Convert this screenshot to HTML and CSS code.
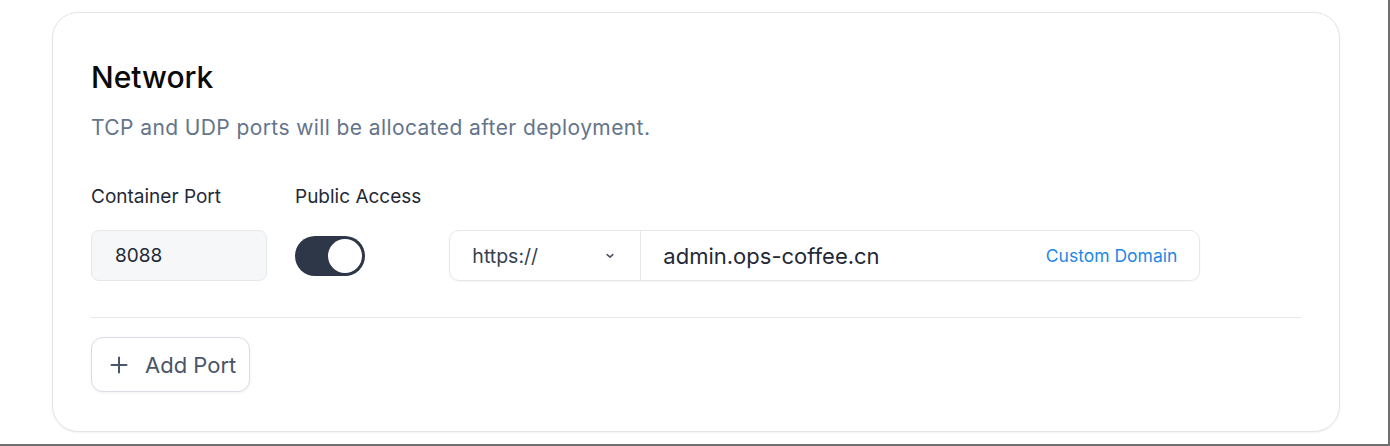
FILE: index.html
```html
<!DOCTYPE html>
<html>
<head>
<meta charset="utf-8">
<link rel="stylesheet" href="styles.css">
</head>
<body>
<div class="frame">
  <section class="card">
    <h2 class="title">Network</h2>
    <p class="subtitle">TCP and UDP ports will be allocated after deployment.</p>
    <div class="grid">
      <div class="label">Container Port</div>
      <div class="label">Public Access</div>
      <div></div>
      <div class="port-input">8088</div>
      <div class="toggle-cell"><div class="toggle"><div class="knob"></div></div></div>
      <div class="url-group">
        <div class="scheme">
          <span>https://</span>
          <svg class="chev" width="12" height="12" viewBox="0 0 12 12"><path d="M3.2 4.6 L6 7.2 L8.8 4.6" fill="none" stroke="#4b5563" stroke-width="1.6" stroke-linecap="round" stroke-linejoin="round"/></svg>
        </div>
        <div class="domain">
          <span class="domain-text">admin.ops-coffee.cn</span>
          <span class="custom">Custom Domain</span>
        </div>
      </div>
    </div>
    <div class="divider"></div>
    <button class="add-btn">
      <svg width="20" height="20" viewBox="0 0 20 20"><path d="M10 2.5 V17.5 M2.5 10 H17.5" stroke="#4a5568" stroke-width="2" stroke-linecap="round"/></svg>
      <span>Add Port</span>
    </button>
  </section>
</div>
</body>
</html>
```

FILE: styles.css
```css
* { box-sizing: border-box; }
html, body { margin: 0; padding: 0; }
body {
  width: 1390px;
  height: 446px;
  background: #ffffff;
  font-family: Inter, "Noto Sans", sans-serif;
  overflow: hidden;
}
.frame {
  width: 1390px;
  height: 446px;
  border-right: 2px solid #6f6f6f;
  border-bottom: 2px solid #6f6f6f;
  padding: 12px 0 0 52px;
}
.card {
  width: 1288px;
  height: 420px;
  border: 1px solid #e4e4e7;
  border-radius: 26px;
  background: #fff;
  box-shadow: 0 1px 2px rgba(0,0,0,0.05);
  padding: 45px 38px 0 38px;
}
.title {
  margin: 0;
  font-size: 30px;
  font-weight: 500;
  line-height: 38px;
  color: #0a0a0a;
}
.subtitle {
  margin: 18px 0 0 0;
  font-size: 21px;
  letter-spacing: 0.4px;
  line-height: 28px;
  color: #64748b;
}
.grid {
  margin-top: 43px;
  display: grid;
  grid-template-columns: 176px max-content 751px;
  justify-content: start;
  column-gap: 28px;
  row-gap: 21px;
  align-items: center;
}
.label {
  font-size: 19px;
  line-height: 24px;
  color: #1f2937;
}
.port-input {
  height: 51px;
  background: #f6f7f9;
  border: 1px solid #e5e7eb;
  border-radius: 8px;
  padding-left: 23px;
  display: flex;
  align-items: center;
  font-size: 19px;
  color: #1f2937;
}
.toggle {
  width: 70px;
  height: 40px;
  border-radius: 20px;
  background: #2d3748;
  padding: 3px;
  display: flex;
  justify-content: flex-end;
}
.knob {
  width: 34px;
  height: 34px;
  border-radius: 50%;
  background: #fff;
}
.url-group {
  height: 51px;
  display: flex;
  border: 1px solid #e5e7eb;
  border-radius: 10px;
  box-shadow: 0 1px 2px rgba(0,0,0,0.04);
}
.scheme {
  width: 191px;
  border-right: 1px solid #e5e7eb;
  display: flex;
  align-items: center;
  justify-content: space-between;
  padding: 0 24px 0 22px;
  font-size: 19.5px;
  color: #374151;
}
.domain {
  flex: 1;
  display: flex;
  align-items: center;
  justify-content: space-between;
  padding: 0 22px 0 22px;
}
.domain-text {
  font-size: 22px;
  color: #1f2937;
}
.custom {
  font-size: 17.5px;
  color: #1e88e5;
}
.divider {
  margin-top: 36px;
  height: 1px;
  background: #e5e7eb;
}
.add-btn {
  margin-top: 19px;
  width: 159px;
  height: 55px;
  border: 1px solid #dadde5;
  border-radius: 12px;
  background: #fff;
  box-shadow: 0 1px 3px rgba(0,0,0,0.06);
  display: flex;
  align-items: center;
  gap: 16px;
  padding: 0 0 0 17px;
  font-family: Inter, "Noto Sans", sans-serif;
  font-size: 22px;
  color: #4a5568;
}
```
